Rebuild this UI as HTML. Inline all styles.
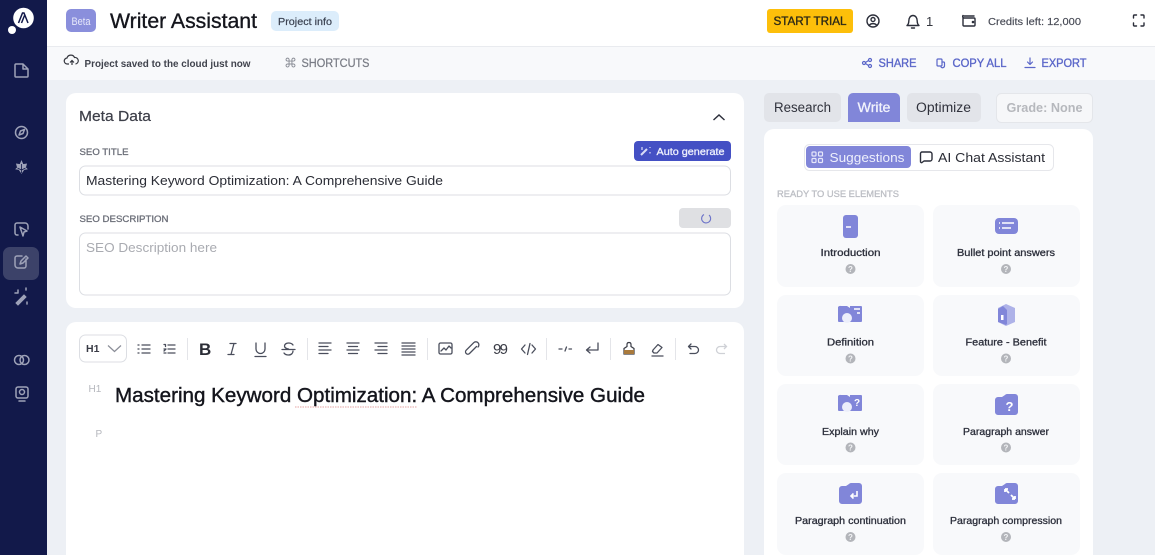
<!DOCTYPE html>
<html><head><meta charset="utf-8"><style>
html,body{margin:0;padding:0;width:1155px;height:555px;overflow:hidden;background:#edf0f5}
svg{display:block;filter:blur(.35px)}
text{font-family:"Liberation Sans",sans-serif}
.i{fill:none;stroke:#9ea2b8;stroke-width:1.5;stroke-linecap:round;stroke-linejoin:round}
.t{fill:none;stroke:#4a4e5c;stroke-width:1.3;stroke-linecap:round;stroke-linejoin:round}
.b{fill:none;stroke:#5b67c9;stroke-width:1.2;stroke-linecap:round;stroke-linejoin:round}
.k{fill:none;stroke:#2b2e3a;stroke-width:1.4;stroke-linecap:round;stroke-linejoin:round}
.lbl{font-size:10px;fill:#2c2f3b;stroke:#2c2f3b;stroke-width:.3px;text-anchor:middle}
</style></head><body>
<svg xmlns="http://www.w3.org/2000/svg" width="1155" height="555" viewBox="0 0 1155 555">
<rect width="1155" height="555" fill="#edf0f5"/>
<rect x="47" width="1108" height="46" fill="#fff"/>
<rect x="47" y="46" width="1108" height="1" fill="#e9ebef"/>
<rect x="47" y="47" width="1108" height="33" fill="#f8f9fb"/>
<rect width="47" height="555" fill="#12194a"/>

<!-- logo -->
<circle cx="23.500" cy="18" r="10.300" fill="#fff"/><circle cx="12" cy="30" r="4" fill="#fff"/>
<path d="M18.500 23l4-10h1.500l4 10M21.500 23l3-7.500" fill="none" stroke="#12194a" stroke-width="1.500"/>

<!-- sidebar icons -->
<path class="i" d="M16 64h7l5 5v7a1 1 0 0 1-1 1H16a1 1 0 0 1-1-1V65a1 1 0 0 1 1-1zM23 64v5h5"/>
<circle class="i" cx="21.500" cy="132.500" r="6"/><path class="i" d="M19 135l1.500-4 4-1.500-1.500 4z"/>
<path d="M21.500 161l1.500 3.500 3.500-.5-1 3.500 1.500 1.500-3 .5-2.500 3.500-2.500-3.500-3-.5 1.500-1.500-1-3.500 3.500.5z" fill="#9ea2b8" stroke="#9ea2b8" stroke-width=".8"/>
<path d="M21.500 164v9M17.500 168l4 2 4-2" fill="none" stroke="#12194a" stroke-width=".8"/>
<path class="i" d="M18 235h-1a2 2 0 0 1-2-2v-8a2 2 0 0 1 2-2h8a3 3 0 0 1 3 3v3M20 227l7 4-3 1-1 4z"/>
<rect x="3" y="247" width="36" height="33" rx="7" fill="#3c4269"/>
<path class="i" d="M26 259v7a2 2 0 0 1-2 2h-6a3 3 0 0 1-3-3v-7a2 2 0 0 1 2-2h5M20 264l1-3 5-5 2 2-5 5z"/>
<path d="M16 303l8-8 2 2-8 8z" fill="#9ea2b8" stroke="#9ea2b8"/><path class="i" d="M18 290v3M15 293h3M26 288v2M27 302v2"/>
<circle class="i" cx="19" cy="360" r="4.500"/><circle class="i" cx="24.500" cy="360" r="4.500"/>
<rect class="i" x="16" y="387" width="12" height="11" rx="2"/><circle class="i" cx="22" cy="392" r="2.500"/><path class="i" d="M19 401h6"/>

<!-- header -->
<rect x="66" y="9" width="30" height="23" rx="5" fill="#8a8fdc"/>
<text x="71.500" y="25" font-size="11" fill="#e7e8fa" textLength="19" lengthAdjust="spacingAndGlyphs">Beta</text>
<text x="110" y="28" font-size="21" fill="#14151c" stroke="#14151c" stroke-width=".35" textLength="147" lengthAdjust="spacingAndGlyphs">Writer Assistant</text>
<rect x="271" y="11" width="68" height="20" rx="5" fill="#dcedfb"/>
<text x="278" y="25" font-size="10.500" fill="#3a4150" stroke="#3a4150" stroke-width=".2" textLength="54" lengthAdjust="spacingAndGlyphs">Project info</text>
<rect x="767" y="9" width="86" height="24" rx="3" fill="#fdbf0a"/>
<text x="773.500" y="25" font-size="11.500" fill="#2d2a17" stroke="#2d2a17" stroke-width=".35" textLength="73" lengthAdjust="spacingAndGlyphs">START TRIAL</text>
<circle class="k" cx="873" cy="21" r="6"/><circle class="k" cx="873" cy="19.500" r="2"/><path class="k" d="M869 25.500c2-2.500 6-2.500 8 0"/>
<path class="k" d="M907 25.500h12c-1.200-1-1.800-2-1.800-4.500 0-3.200-1.700-5.500-4.200-5.500s-4.200 2.300-4.200 5.500c0 2.500-.6 3.500-1.800 4.500zM911.500 28h3"/>
<text x="926" y="26" font-size="13" fill="#35373f">1</text>
<path class="k" d="M964 16h10M963 18v7a1 1 0 0 0 1 1h10a1 1 0 0 0 1-1v-6a1 1 0 0 0-1-1h-10a1.500 1.500 0 0 1-1-2.500"/><circle cx="973" cy="22" r="1.300" fill="#2b2e3a"/>
<text x="988" y="25" font-size="10" fill="#474a55" stroke="#474a55" stroke-width=".15" textLength="93" lengthAdjust="spacingAndGlyphs">Credits left: 12,000</text>
<path class="k" d="M1133.500 18v-2a1 1 0 0 1 1-1h2M1141 15h2a1 1 0 0 1 1 1v2M1144 23v2a1 1 0 0 1-1 1h-2M1136.500 26h-2a1 1 0 0 1-1-1v-2" stroke-width="1.300"/>

<!-- sub bar -->
<path d="M72 65v-4M70 62.500l2-2 2 2M69 64h-1.500a3 3 0 0 1-.5-6 4 4 0 0 1 7.500-.5 3 3 0 0 1 1 6.500" fill="none" stroke="#35373f" stroke-width="1.200"/>
<text x="84.500" y="67" font-size="10" font-weight="700" fill="#40434d" textLength="166" lengthAdjust="spacingAndGlyphs">Project saved to the cloud just now</text>
<text x="284" y="67.500" font-size="13" fill="#8a8d96" style="font-family:'DejaVu Sans',sans-serif">⌘</text>
<text x="301.500" y="67" font-size="11.500" fill="#7a7d86" stroke="#7a7d86" stroke-width=".25" textLength="68" lengthAdjust="spacingAndGlyphs">SHORTCUTS</text>
<circle class="b" cx="864" cy="63" r="1.500"/><circle class="b" cx="870" cy="60" r="1.500"/><circle class="b" cx="870" cy="66" r="1.500"/><path class="b" d="M865.500 62.500l3-2M865.500 63.500l3 2"/>
<text x="878.500" y="67" font-size="11.500" fill="#5b67c9" stroke="#5b67c9" stroke-width=".35" textLength="38" lengthAdjust="spacingAndGlyphs">SHARE</text>
<rect class="b" x="937" y="59" width="5" height="7" rx="1"/><path class="b" d="M942 62h1.500a1 1 0 0 1 1 1v3a2 2 0 0 1-3.500 1"/>
<text x="952.500" y="67" font-size="11.500" fill="#5b67c9" stroke="#5b67c9" stroke-width=".35" textLength="54" lengthAdjust="spacingAndGlyphs">COPY ALL</text>
<path class="b" d="M1030 58v6M1027.500 62l2.500 2.500 2.500-2.500M1025 67.500h10"/>
<text x="1041.500" y="67" font-size="11.500" fill="#5b67c9" stroke="#5b67c9" stroke-width=".35" textLength="45" lengthAdjust="spacingAndGlyphs">EXPORT</text>

<!-- meta card -->
<rect x="66" y="93" width="678" height="215" rx="10" fill="#fff"/>
<text x="79" y="121" font-size="14.500" fill="#3d3f49" stroke="#3d3f49" stroke-width=".2" textLength="72" lengthAdjust="spacingAndGlyphs">Meta Data</text>
<path d="M713.500 120l5.500-5 5.500 5" fill="none" stroke="#2b2e3a" stroke-width="1.400"/>
<text x="79.500" y="155" font-size="9.500" fill="#6d707a" stroke="#6d707a" stroke-width=".3" textLength="49" lengthAdjust="spacingAndGlyphs">SEO TITLE</text>
<rect x="634" y="141" width="97" height="20" rx="4" fill="#4450c4"/>
<path d="M641 155l6-6" stroke="#d9dcf6" stroke-width="2" fill="none"/><path d="M642 147v3M650 152v1.500M650 147v1" stroke="#d9dcf6" stroke-width="1.200" fill="none"/>
<text x="656.500" y="155" font-size="10" fill="#eef0fc" stroke="#eef0fc" stroke-width=".3" textLength="68" lengthAdjust="spacingAndGlyphs">Auto generate</text>
<rect x="79.500" y="166" width="651" height="29" rx="6" fill="#fff" stroke="#dcdee3"/>
<text x="86" y="185" font-size="12.500" fill="#2b2d36" textLength="357" lengthAdjust="spacingAndGlyphs">Mastering Keyword Optimization: A Comprehensive Guide</text>
<text x="79.500" y="222" font-size="9.500" fill="#6d707a" stroke="#6d707a" stroke-width=".3" textLength="89" lengthAdjust="spacingAndGlyphs">SEO DESCRIPTION</text>
<rect x="679" y="208" width="52" height="20" rx="4" fill="#dfe0e3"/>
<path d="M709 215a4.500 4.500 0 1 1-5-.5" fill="none" stroke="#6d74c9" stroke-width="1.100"/>
<rect x="79.500" y="233" width="651" height="62" rx="6" fill="#fff" stroke="#dcdee3"/>
<text x="86" y="252" font-size="12.500" fill="#a9abb1" textLength="131" lengthAdjust="spacingAndGlyphs">SEO Description here</text>

<!-- editor card -->
<path d="M66 555V332a10 10 0 0 1 10-10h658a10 10 0 0 1 10 10v223z" fill="#fff"/>
<rect x="79.500" y="335" width="47" height="27" rx="6" fill="#fff" stroke="#dcdee3"/>
<text x="86" y="352" font-size="10.500" font-weight="700" fill="#3a3c46">H1</text>
<path d="M108 345.500l6.500 6 6.500-6" fill="none" stroke="#8b8e98" stroke-width="1.200"/>
<!-- toolbar -->
<path class="t" d="M142 345h8M142 349h8M142 353h8M138 345h1M138 349h1M138 353h1"/>
<path class="t" d="M168 345h7M168 349h7M168 353h7M164 344.500h1.500v2M164 349h2l-2 2M164 353h2"/>
<rect x="187" y="338" width="1" height="22" fill="#e4e5e9"/>
<text x="199" y="355" font-size="17" font-weight="700" fill="#2b2d36">B</text>
<path class="t" d="M230 343.500h6M228 354.500h6M234 343.500l-3 11"/>
<path class="t" d="M256 343v6a4.500 4.500 0 0 0 9 0v-6M255 356.500h11"/>
<path class="t" d="M293 345c-1-1.500-2.500-2-4.500-2-2.500 0-4 1.500-4 3s1.500 2.500 4 3M282 349.500h13M293 351c0 2-1.500 4-4.500 4-2 0-3.500-.5-4.500-2"/>
<rect x="307" y="338" width="1" height="22" fill="#e4e5e9"/>
<path class="t" d="M319 343h12M319 346.500h9M319 350h12M319 353.500h9"/>
<path class="t" d="M347 343h12M348.500 346.500h9M347 350h12M348.500 353.500h9"/>
<path class="t" d="M375 343h12M378 346.500h9M375 350h12M378 353.500h9"/>
<path class="t" d="M402 343h13M402 346h13M402 349h13M402 352h13M402 355h13" stroke-width="1.200"/>
<rect x="427" y="338" width="1" height="22" fill="#e4e5e9"/>
<rect class="t" x="439" y="343" width="13" height="11" rx="1.500"/><path class="t" d="M441 351l3-3 2 2 3-4 2 2"/>
<path class="t" d="M477 346l-7 7a2.300 2.300 0 0 1-3.300-3.300l7.500-7.500a3 3 0 0 1 4.300 4.300" transform="translate(-.5 .5)"/>
<text x="493" y="354" font-size="15" fill="#3a3c46" textLength="15" lengthAdjust="spacing">99</text>
<path class="t" d="M525 345l-3.500 4 3.500 4M532 345l3.500 4-3.500 4M530 343.500l-2.500 11"/>
<rect x="546" y="338" width="1" height="22" fill="#e4e5e9"/>
<path class="t" d="M559 349h3M565 351l1.500-4M569 349h2.500"/>
<path class="t" d="M598 343v7h-11M590 347l-3.500 3 3.500 3"/>
<rect x="610" y="338" width="1" height="22" fill="#e4e5e9"/>
<path d="M629 342.500c1.500 0 2 1 2 2v2l3 2v5.500h-10V348.500l3-2v-2c0-1 .500-2 2-2z" fill="#fff" stroke="#3a3c46" stroke-width="1.200"/><rect x="624" y="350" width="10" height="4" fill="#a97a3c"/>
<path class="t" d="M653 350l5-5.500 4 3-5 5.500h-3l-1.500-1.500zM652 356h11"/>
<rect x="675" y="338" width="1" height="22" fill="#e4e5e9"/>
<path class="t" d="M691 344l-2.500 2.500 2.500 2.500M689 346.500h6a3 3 0 0 1 0 7h-5" />
<path d="M724 344l2.500 2.500-2.500 2.500M726 346.500h-6a3 3 0 0 0 0 7h5" fill="none" stroke="#cfd1d6" stroke-width="1.300"/>
<text x="88.500" y="392" font-size="10" fill="#b5b7bd">H1</text>
<text x="115" y="402" font-size="20" fill="#14151c" stroke="#14151c" stroke-width=".4" textLength="530" lengthAdjust="spacingAndGlyphs">Mastering Keyword Optimization: A Comprehensive Guide</text>
<path d="M295 407h122" stroke="#e5a3a3" stroke-width="1" stroke-dasharray="1.500 1"/>
<text x="95.500" y="437" font-size="10" fill="#b5b7bd">P</text>

<!-- tabs -->
<rect x="764" y="93" width="77" height="29" rx="5" fill="#e2e4e9"/>
<text x="774" y="112" font-size="13.500" fill="#30323c" textLength="57" lengthAdjust="spacingAndGlyphs">Research</text>
<path d="M848 122V98a5 5 0 0 1 5-5h42a5 5 0 0 1 5 5v24z" fill="#8186d9"/>
<text x="857.500" y="112" font-size="13.500" fill="#f2f3fc" stroke="#f2f3fc" stroke-width=".3" textLength="33" lengthAdjust="spacingAndGlyphs">Write</text>
<rect x="907" y="93" width="74" height="29" rx="5" fill="#e2e4e9"/>
<text x="916" y="112" font-size="13.500" fill="#30323c" textLength="55" lengthAdjust="spacingAndGlyphs">Optimize</text>
<rect x="996.500" y="93.500" width="96" height="29" rx="5" fill="#f6f7f9" stroke="#e4e6ea"/>
<text x="1006.500" y="112" font-size="12.500" font-weight="700" fill="#b6b8bd" textLength="76" lengthAdjust="spacingAndGlyphs">Grade: None</text>

<!-- right card -->
<path d="M764 555V139a10 10 0 0 1 10-10h309a10 10 0 0 1 10 10v416z" fill="#fff"/>
<rect x="804.500" y="144.500" width="249" height="26" rx="5" fill="#fff" stroke="#e6e7eb"/>
<rect x="806" y="146" width="105" height="22" rx="4" fill="#8186d9"/>
<g fill="none" stroke="#e6e7fa" stroke-width="1.200"><rect x="812" y="152" width="4" height="4" rx="1"/><rect x="818.500" y="152" width="4" height="4" rx="1"/><rect x="812" y="158.500" width="4" height="4" rx="1"/><rect x="818.500" y="158.500" width="4" height="4" rx="1"/></g>
<text x="829.500" y="162" font-size="13" fill="#eef0fc" textLength="75" lengthAdjust="spacingAndGlyphs">Suggestions</text>
<path class="k" d="M922 152h8a2 2 0 0 1 2 2v5a2 2 0 0 1-2 2h-6l-2 1.500a1 1 0 0 1-1.500-1V153.500a1.500 1.500 0 0 1 1.500-1.500z"/>
<text x="938" y="162" font-size="13" fill="#2b2d36" textLength="107" lengthAdjust="spacingAndGlyphs">AI Chat Assistant</text>
<text x="777" y="197" font-size="9.500" fill="#bcbec4" stroke="#bcbec4" stroke-width=".3" textLength="122" lengthAdjust="spacingAndGlyphs">READY TO USE ELEMENTS</text>

<g fill="#f8f9fb">
<rect x="777" y="205" width="147" height="82" rx="9"/><rect x="933" y="205" width="147" height="82" rx="9"/>
<rect x="777" y="295" width="147" height="81" rx="9"/><rect x="933" y="295" width="147" height="81" rx="9"/>
<rect x="777" y="384" width="147" height="81" rx="9"/><rect x="933" y="384" width="147" height="81" rx="9"/>
<rect x="777" y="473" width="147" height="82" rx="9"/><rect x="933" y="473" width="147" height="82" rx="9"/>
</g>
<text class="lbl" x="850.500" y="256" textLength="60" lengthAdjust="spacingAndGlyphs">Introduction</text>
<text class="lbl" x="1006" y="256" textLength="98" lengthAdjust="spacingAndGlyphs">Bullet point answers</text>
<text class="lbl" x="850.500" y="345.500" textLength="47" lengthAdjust="spacingAndGlyphs">Definition</text>
<text class="lbl" x="1006" y="345.500" textLength="81" lengthAdjust="spacingAndGlyphs">Feature - Benefit</text>
<text class="lbl" x="850.500" y="435" textLength="57" lengthAdjust="spacingAndGlyphs">Explain why</text>
<text class="lbl" x="1006" y="435" textLength="86" lengthAdjust="spacingAndGlyphs">Paragraph answer</text>
<text class="lbl" x="850.500" y="524" textLength="111" lengthAdjust="spacingAndGlyphs">Paragraph continuation</text>
<text class="lbl" x="1006" y="524" textLength="112" lengthAdjust="spacingAndGlyphs">Paragraph compression</text>
<!-- help dots -->
<g fill="#b3b5ba">
<circle cx="850.500" cy="269" r="5"/><circle cx="1006" cy="269" r="5"/>
<circle cx="850.500" cy="358.500" r="5"/><circle cx="1006" cy="358.500" r="5"/>
<circle cx="850.500" cy="447.500" r="5"/><circle cx="1006" cy="447.500" r="5"/>
<circle cx="850.500" cy="537" r="5"/><circle cx="1006" cy="537" r="5"/>
</g>
<g font-size="8" font-weight="700" fill="#f3f4f6" text-anchor="middle">
<text x="850.500" y="272">?</text><text x="1006" y="272">?</text>
<text x="850.500" y="361.500">?</text><text x="1006" y="361.500">?</text>
<text x="850.500" y="450.500">?</text><text x="1006" y="450.500">?</text>
<text x="850.500" y="540">?</text><text x="1006" y="540">?</text>
</g>
<!-- tile icons -->
<rect x="843" y="215" width="15" height="23" rx="3" fill="#8186d9"/><path d="M846 227h5" stroke="#fff" stroke-width="1.500"/>
<rect x="995" y="218" width="23" height="16" rx="4" fill="#8186d9"/><path d="M999 223h1M999 228h1M1002 223h12M1002 228h9" stroke="#fff" stroke-width="1.500"/>
<path d="M841 306h6l3 2v-2h11a1 1 0 0 1 1 1v14a1 1 0 0 1-1 1h-22a1 1 0 0 1-1-1v-14a3 3 0 0 1 3-1z" fill="#8186d9"/><circle cx="847" cy="318" r="5" fill="#eceefb"/><path d="M854 309h6M857 313h3" stroke="#fff" stroke-width="1.500"/>
<path d="M1006 304l9 4v14l-9 4-8-4v-14z" fill="#aeb2e8"/><path d="M1003 306l-5 3v13l8 3 1-1v-14z" fill="#8186d9"/><rect x="1001" y="315" width="2.500" height="5" fill="#fff"/>
<path d="M841 395h6l3 2v-2h11a1 1 0 0 1 1 1v14a1 1 0 0 1-1 1h-22a1 1 0 0 1-1-1v-14a3 3 0 0 1 3-1z" fill="#8186d9"/><circle cx="847" cy="407" r="5" fill="#eceefb"/><text x="857" y="406" font-size="10" font-weight="700" fill="#fff" text-anchor="middle">?</text>
<path d="M995 400a3 3 0 0 1 3-3h4l3-2a3 3 0 0 1 2-1h8a3 3 0 0 1 3 3v15a3 3 0 0 1-3 3h-17a3 3 0 0 1-3-3z" fill="#8186d9"/><text x="1009.500" y="411" font-size="13" font-weight="700" fill="#fff" text-anchor="middle">?</text>
<path d="M839 489a3 3 0 0 1 3-3h4l3-2a3 3 0 0 1 2-1h8a3 3 0 0 1 3 3v15a3 3 0 0 1-3 3h-17a3 3 0 0 1-3-3z" fill="#8186d9"/><path d="M857 491v5h-6M853.500 493.500l-2.500 2.500 2.500 2.500" fill="none" stroke="#fff" stroke-width="1.600"/>
<path d="M995 489a3 3 0 0 1 3-3h4l3-2a3 3 0 0 1 2-1h8a3 3 0 0 1 3 3v15a3 3 0 0 1-3 3h-17a3 3 0 0 1-3-3z" fill="#8186d9"/><path d="M1005 489l4 4M1005 489h3M1005 489v3M1015 499l-4-4M1015 499h-3M1015 499v-3" stroke="#fff" stroke-width="1.800" fill="none"/>
</svg>
</body></html>
